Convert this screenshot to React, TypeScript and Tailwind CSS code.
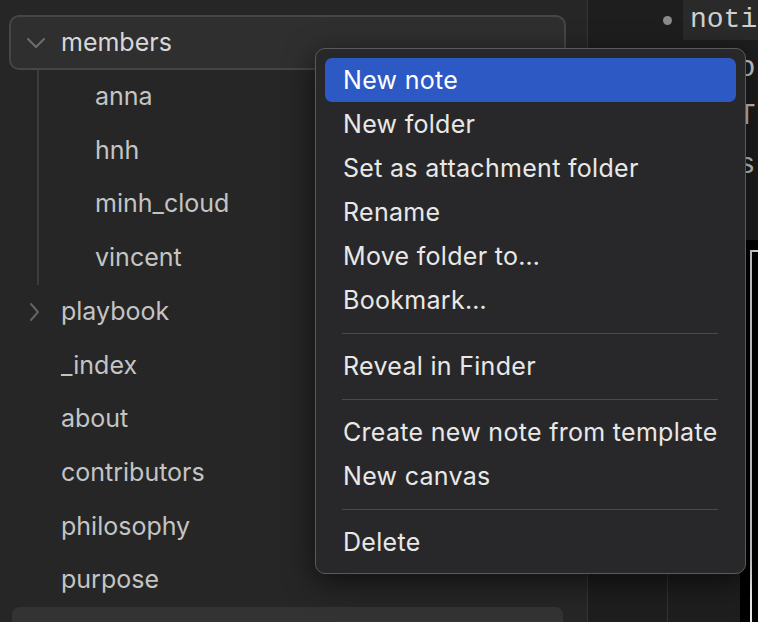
const CHILDREN = ["anna", "hnh", "minh_cloud", "vincent"];
const FILES = ["_index", "about", "contributors", "philosophy", "purpose"];

type MenuEntry = { label: string; active?: boolean } | "sep";

const MENU: MenuEntry[] = [
  { label: "New note", active: true },
  { label: "New folder" },
  { label: "Set as attachment folder" },
  { label: "Rename" },
  { label: "Move folder to…" },
  { label: "Bookmark…" },
  "sep",
  { label: "Reveal in Finder" },
  "sep",
  { label: "Create new note from template" },
  { label: "New canvas" },
  "sep",
  { label: "Delete" },
];

function Chevron({ open }: { open?: boolean }) {
  if (open)
    return (
      <svg width="20" height="20" viewBox="0 0 20 20" fill="none" className="shrink-0">
        <polyline points="2,6 10,14 18,6" stroke="#6e6e6e" strokeWidth="2" strokeLinecap="round" strokeLinejoin="round" />
      </svg>
    );
  return (
    <svg width="20" height="20" viewBox="0 0 20 20" fill="none" className="shrink-0">
      <polyline points="6,2 13,10 6,18" stroke="#646464" strokeWidth="2" strokeLinecap="round" strokeLinejoin="round" />
    </svg>
  );
}

function ContextMenu() {
  return (
    <div className="absolute left-[315px] top-[48px] w-[431px] rounded-[10px] border border-[#5a5a5c] bg-[#28282a] p-[9px] shadow-[0_8px_30px_rgba(0,0,0,0.6)]">
      {MENU.map((item, i) =>
        item === "sep" ? (
          <div key={i} className="h-[22px] flex items-center pl-[17px] pr-[18px]">
            <div className="h-px w-full bg-[#4a4a4c]" />
          </div>
        ) : (
          <div
            key={i}
            className={`h-[44px] flex items-center pl-[18px] pt-[1px] rounded-[7px] text-[25px] tracking-[0.3px] ${
              item.active ? "bg-[#2c59c4] text-white" : "text-[#e8e8e8]"
            }`}
          >
            {item.label}
          </div>
        )
      )}
    </div>
  );
}

export default function App() {
  return (
    <div
      className="relative w-[758px] h-[622px] overflow-hidden flex bg-[#1e1e1e]"
      style={{ fontFamily: "Inter, 'Noto Sans', sans-serif" }}
    >
      {/* 사이드바 파일 트리 */}
      <div className="w-[588px] shrink-0 h-full bg-[#262626] border-r border-[#363636] flex flex-col pt-[15px]">
        <div className="ml-[9px] mr-[21px] h-[55px] shrink-0 rounded-[10px] border-2 border-[#464646] bg-[#2f2f2f] flex items-center pl-[15px] gap-[15px] text-[25px] text-[#d8d8d8]">
          <Chevron open />
          <span>members</span>
        </div>
        <div className="ml-[37px] border-l-2 border-[#3c3c3c]">
          {CHILDREN.map((name) => (
            <div key={name} className="h-[53.7px] flex items-center pl-[56px] text-[25px] text-[#c4c4c4]">
              {name}
            </div>
          ))}
        </div>
        <div className="h-[53.7px] shrink-0 flex items-center pl-[25px] gap-[16px] text-[25px] text-[#c4c4c4]">
          <Chevron />
          <span>playbook</span>
        </div>
        {FILES.map((name) => (
          <div key={name} className="h-[53.7px] shrink-0 flex items-center pl-[61px] text-[25px] text-[#c4c4c4]">
            {name}
          </div>
        ))}
        <div className="ml-[12px] mr-[24px] flex-1 rounded-t-[8px] bg-[#333333]" />
      </div>

      {/* 에디터 영역 */}
      <div className="flex-1 min-w-0 flex flex-col" style={{ fontFamily: "'Liberation Mono', monospace" }}>
        <div className="flex items-center h-[40px] shrink-0">
          <div className="ml-[75px] w-[9px] h-[9px] shrink-0 rounded-full bg-[#8a8a8a]" />
          <div className="ml-[11px] h-[40px] flex-1 bg-[#2a2a2a] flex items-center pl-[7px] text-[28px] text-[#cfcfcf] whitespace-nowrap overflow-hidden">
            noti
          </div>
        </div>
        <div className="pl-[150px] pt-[4px] text-[29px] text-[#d0d0d0] whitespace-nowrap overflow-hidden shrink-0 h-[200px]">
          <div className="h-[50px] flex items-center">o</div>
          <div className="h-[46px] flex items-center">T</div>
          <div className="h-[52px] flex items-center">s</div>
        </div>
        <div className="flex flex-1">
          <div className="w-[80px] border-r border-[#333333]" />
          <div className="w-[72px]" />
          <div className="flex-1 bg-black pt-[10px] pl-[10px]">
            <div className="h-full border-t-2 border-l-2 border-[#e8e8e8]" />
          </div>
        </div>
      </div>

      <ContextMenu />
    </div>
  );
}
